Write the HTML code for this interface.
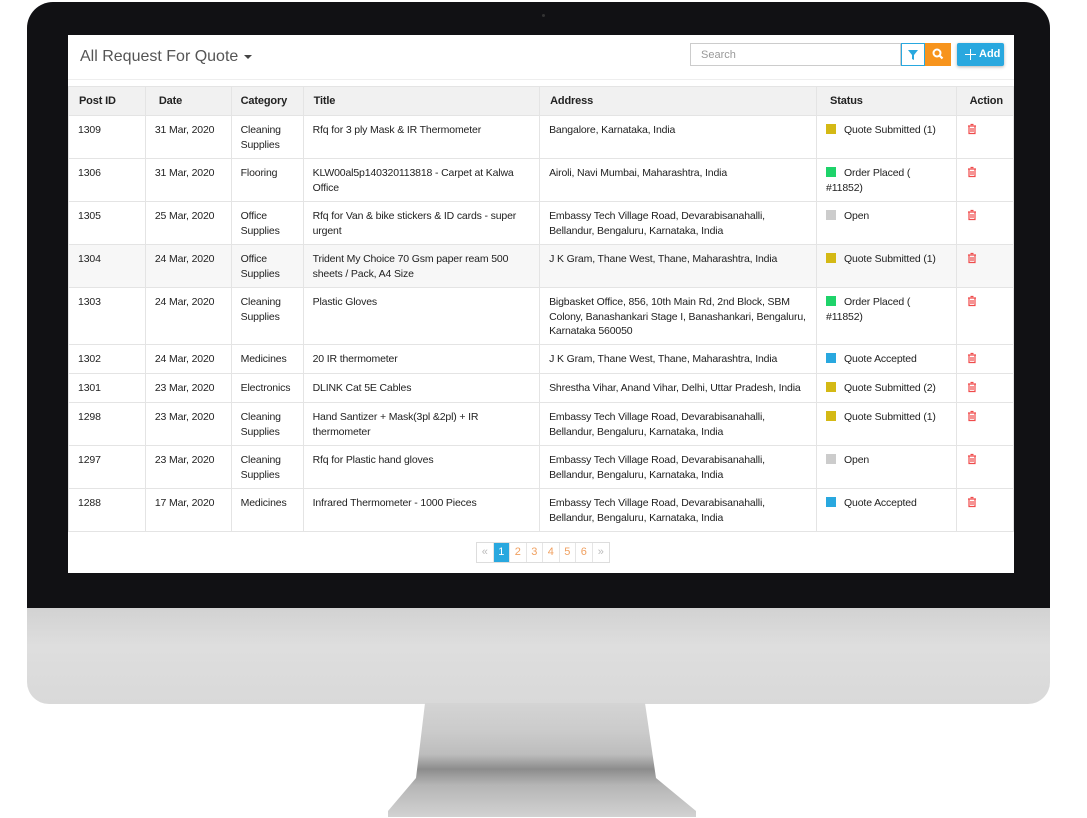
<!DOCTYPE html>
<html><head><meta charset="utf-8"><style>
*{margin:0;padding:0;box-sizing:border-box}
body{width:1087px;height:818px;background:#fff;position:relative;overflow:hidden;font-family:"Liberation Sans",Arial,sans-serif}
.bezel{position:absolute;left:27px;top:2px;width:1023px;height:607px;background:#111114;border-radius:26px 26px 0 0}
.chin{position:absolute;left:27px;top:608px;width:1023px;height:96px;background:linear-gradient(#d2d2d2,#dedede 40%,#d9d9d9);border-radius:0 0 22px 22px}
.stand{position:absolute;left:386px;top:703px;width:312px;height:114px;background:linear-gradient(#d4d4d4 0%,#cbcbcb 25%,#bdbdbd 45%,#8c8c8c 58%,#b5b5b5 72%,#d2d2d2 100%);clip-path:polygon(39px 0,259px 0,270px 75px,310px 108px,310px 114px,2px 114px,2px 108px,30px 75px)}
.screen{position:absolute;left:68px;top:35px;width:946px;height:538px;background:#fff;overflow:hidden}
.title{position:absolute;left:12px;top:13px;font-size:16px;color:#555}
.title:after{content:"";display:inline-block;margin-left:6px;vertical-align:middle;border-left:4px solid transparent;border-right:4px solid transparent;border-top:4px solid #444}
.search{position:absolute;left:622px;top:8px;width:211px;height:23px;border:1px solid #ccc;font-size:11px;color:#999;padding:5px 10px}
.filt{position:absolute;left:833px;top:8px;width:24px;height:23px;border:1px solid #29a8df;background:#fff}
.srch{position:absolute;left:857px;top:8px;width:26px;height:23px;background:#f7941d}
.add{position:absolute;left:889px;top:8px;width:47px;height:23px;background:#29a8df;border-radius:2px;color:#fff;font-size:11px;font-weight:bold;padding:5px 0 0 22px;box-shadow:0 1px 3px rgba(0,0,0,.3)}
.add:before{content:"";position:absolute;left:8px;top:11px;width:11px;height:1px;background:#fff}
.add:after{content:"";position:absolute;left:13px;top:6px;width:1px;height:11px;background:#fff}
.sep{position:absolute;left:0;top:44px;width:946px;height:1px;background:#eee}
table{position:absolute;left:0;top:51px;border-collapse:collapse;font-size:10.5px;letter-spacing:-0.15px;color:#222;table-layout:fixed}
th{background:#f1f1f1;height:29px;text-align:left;padding:0 10px;font-weight:bold;font-size:11px;border:1px solid #e4e4e4}
td{vertical-align:top;padding:7px 9px 0;line-height:14.5px;border:1px solid #e4e4e4}
tr.g td{background:#f7f7f7}
.sq{display:inline-block;width:10px;height:10px;margin-right:8px;vertical-align:-1px}
.y{background:#d4b915}.gr{background:#1ed36a}.o{background:#ccc}.b{background:#29a8df}
.pg{position:absolute;left:408px;top:507px;height:21px;display:flex;border:1px solid #ddd;font-size:11px}
.pg span{width:16.5px;text-align:center;line-height:19px;color:#f0a060;border-right:1px solid #e5e5e5}
.pg span.a{background:#29a8df;color:#fff}
.pg span.d{color:#bbb}
</style></head><body>
<div class="bezel"></div>
<div class="chin"></div>
<div class="stand"></div>
<div style="position:absolute;left:542px;top:14px;width:3px;height:3px;border-radius:50%;background:#333"></div>
<div class="screen">
<div class="title">All Request For Quote</div>
<div class="search">Search</div>
<div class="filt"><svg width="22" height="21" viewBox="0 0 22 21"><path d="M6 6h10l-4 5v5l-2-1v-4z" fill="#29a8df"/></svg></div>
<div class="srch"><svg width="26" height="23" viewBox="0 0 26 23"><circle cx="12" cy="10" r="3.5" fill="none" stroke="#fff" stroke-width="2"/><path d="M14.5 12.5l3 3" stroke="#fff" stroke-width="2.2"/></svg></div>
<div class="add">Add</div>
<div class="sep"></div>
<table>
<colgroup><col style="width:77px"><col style="width:86px"><col style="width:72px"><col style="width:237px"><col style="width:277px"><col style="width:140px"><col style="width:57px"></colgroup>
<tr><th>Post ID</th><th style="padding-left:13px">Date</th><th style="padding-left:9px">Category</th><th>Title</th><th>Address</th><th style="padding-left:13px">Status</th><th style="padding-left:13px">Action</th></tr>
<tr style="height:43px"><td>1309</td><td>31 Mar, 2020</td><td>Cleaning Supplies</td><td>Rfq for 3 ply Mask &amp; IR Thermometer</td><td>Bangalore, Karnataka, India</td><td><span class="sq y"></span>Quote Submitted (1)</td><td>T</td></tr>
<tr style="height:43px"><td>1306</td><td>31 Mar, 2020</td><td>Flooring</td><td>KLW00al5p140320113818 - Carpet at Kalwa Office</td><td>Airoli, Navi Mumbai, Maharashtra, India</td><td><span class="sq gr"></span>Order Placed ( #11852)</td><td>T</td></tr>
<tr style="height:43px"><td>1305</td><td>25 Mar, 2020</td><td>Office Supplies</td><td>Rfq for Van &amp; bike stickers &amp; ID cards - super urgent</td><td>Embassy Tech Village Road, Devarabisanahalli, Bellandur, Bengaluru, Karnataka, India</td><td><span class="sq o"></span>Open</td><td>T</td></tr>
<tr class="g" style="height:43px"><td>1304</td><td>24 Mar, 2020</td><td>Office Supplies</td><td>Trident My Choice 70 Gsm paper ream 500 sheets / Pack, A4 Size</td><td>J K Gram, Thane West, Thane, Maharashtra, India</td><td><span class="sq y"></span>Quote Submitted (1)</td><td>T</td></tr>
<tr style="height:57px"><td>1303</td><td>24 Mar, 2020</td><td>Cleaning Supplies</td><td>Plastic Gloves</td><td>Bigbasket Office, 856, 10th Main Rd, 2nd Block, SBM Colony, Banashankari Stage I, Banashankari, Bengaluru, Karnataka 560050</td><td><span class="sq gr"></span>Order Placed ( #11852)</td><td>T</td></tr>
<tr style="height:29px"><td>1302</td><td>24 Mar, 2020</td><td>Medicines</td><td>20 IR thermometer</td><td>J K Gram, Thane West, Thane, Maharashtra, India</td><td><span class="sq b"></span>Quote Accepted</td><td>T</td></tr>
<tr style="height:29px"><td>1301</td><td>23 Mar, 2020</td><td>Electronics</td><td>DLINK Cat 5E Cables</td><td style="white-space:nowrap">Shrestha Vihar, Anand Vihar, Delhi, Uttar Pradesh, India</td><td><span class="sq y"></span>Quote Submitted (2)</td><td>T</td></tr>
<tr style="height:43px"><td>1298</td><td>23 Mar, 2020</td><td>Cleaning Supplies</td><td>Hand Santizer + Mask(3pl &amp;2pl) + IR thermometer</td><td>Embassy Tech Village Road, Devarabisanahalli, Bellandur, Bengaluru, Karnataka, India</td><td><span class="sq y"></span>Quote Submitted (1)</td><td>T</td></tr>
<tr style="height:43px"><td>1297</td><td>23 Mar, 2020</td><td>Cleaning Supplies</td><td>Rfq for Plastic hand gloves</td><td>Embassy Tech Village Road, Devarabisanahalli, Bellandur, Bengaluru, Karnataka, India</td><td><span class="sq o"></span>Open</td><td>T</td></tr>
<tr style="height:43px"><td>1288</td><td>17 Mar, 2020</td><td>Medicines</td><td>Infrared Thermometer - 1000 Pieces</td><td>Embassy Tech Village Road, Devarabisanahalli, Bellandur, Bengaluru, Karnataka, India</td><td><span class="sq b"></span>Quote Accepted</td><td>T</td></tr>
</table>
<div class="pg"><span class="d">«</span><span class="a">1</span><span>2</span><span>3</span><span>4</span><span>5</span><span>6</span><span class="d" style="border:none">»</span></div>
</div>
<script>
document.querySelectorAll('td').forEach(function(td){if(td.textContent==='T'){td.innerHTML='<svg width="10" height="12" viewBox="0 0 10 12" style="margin-left:1px"><path d="M3.5 1.5h3M1 3h8M2 3v7.5h6V3M4 5v4M6 5v4" fill="none" stroke="#ef4b4b" stroke-width="1.2"/></svg>';}});
</script>
</body></html>
